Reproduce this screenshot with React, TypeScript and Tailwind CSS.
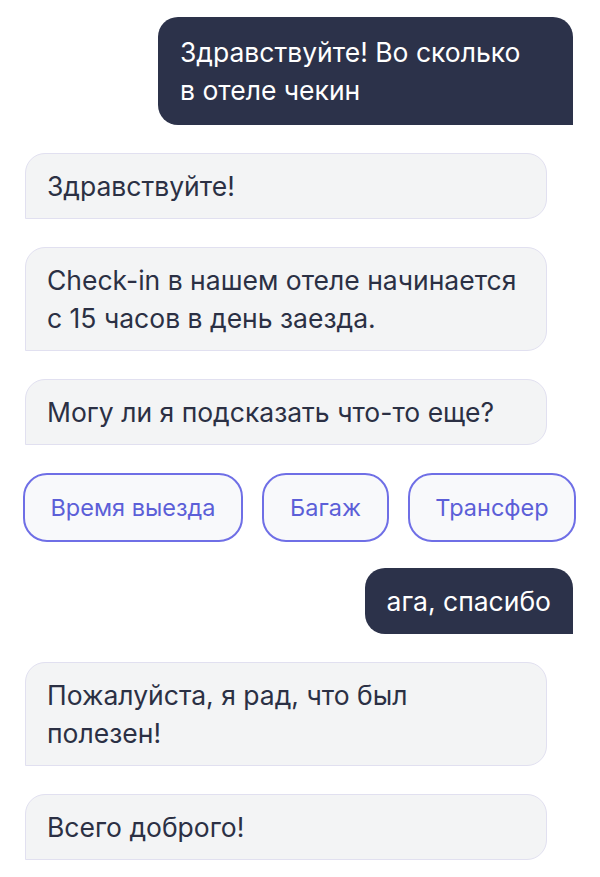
export default function App() {
  const font = { fontFamily: "Inter, 'Noto Sans', sans-serif" };

  const bot = (text: React.ReactNode, key: string) => (
    <div
      key={key}
      className="w-[522px] rounded-[20px] rounded-bl-none border border-[#e1e0f0] bg-[#f3f4f5] px-[21px] py-[13px] text-[26.5px] leading-[38px] text-[#2b3044]"
    >
      {text}
    </div>
  );

  const user = (text: React.ReactNode, w?: string) => (
    <div
      className={
        "self-end rounded-[20px] rounded-br-none bg-[#2c324a] px-[22px] py-[14px] text-[26.5px] leading-[38px] text-white " +
        (w ?? "")
      }
    >
      {text}
    </div>
  );

  const chips = [
    { label: "Время выезда", w: "w-[220px]" },
    { label: "Багаж", w: "w-[127px]" },
    { label: "Трансфер", w: "w-[168px]" },
  ];

  return (
    <div className="min-h-[877px] bg-white" style={font}>
      <div className="flex flex-col gap-[28px] pl-[25px] pr-[27px] pt-[17px] pb-4">
        {user(
          <>
            Здравствуйте! Во сколько
            <br />в отеле чекин
          </>,
          "w-[415px] py-[16px]"
        )}
        {bot("Здравствуйте!", "b1")}
        {bot(
          <>
            Check-in в нашем отеле начинается
            <br />с 15 часов в день заезда.
          </>,
          "b2"
        )}
        {bot("Могу ли я подсказать что-то еще?", "b3")}
        <div className="-ml-[2px] flex gap-[19px]">
          {chips.map((c) => (
            <button
              key={c.label}
              className={
                "h-[69px] shrink-0 whitespace-nowrap rounded-[24px] border-2 border-[#6f6fe6] bg-[#f8f9fb] text-[23.5px] text-[#5c5fd8] " +
                c.w
              }
            >
              {c.label}
            </button>
          ))}
        </div>
        <div className="-mt-[2px]">
          <div className="flex justify-end">{user("ага, спасибо")}</div>
        </div>
        {bot(
          <>
            Пожалуйста, я рад, что был
            <br />
            полезен!
          </>,
          "b4"
        )}
        {bot("Всего доброго!", "b5")}
      </div>
    </div>
  );
}
